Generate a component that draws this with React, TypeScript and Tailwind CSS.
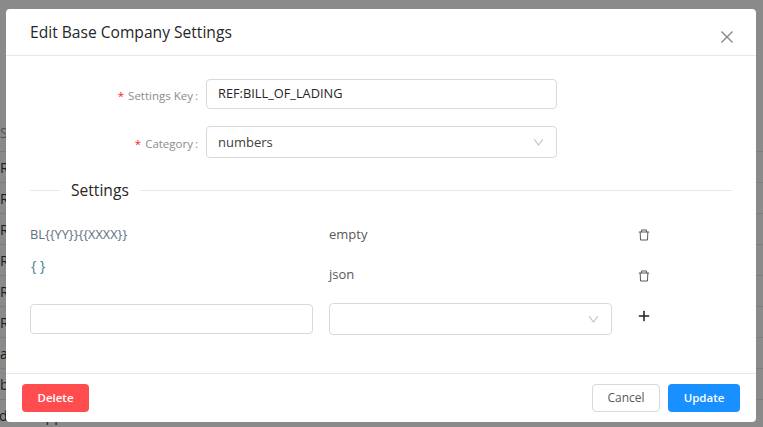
import { AiOutlineClose, AiOutlineDelete, AiOutlineDown, AiOutlinePlus } from 'react-icons/ai';

const rowLetters = ['R', 'R', 'R', 'R', 'R', 'R', 'a', 'b'];

function BackgroundPage() {
  return (
    <div className="h-[427px] bg-[#8a8a8a] text-[#1c1c1c]">
      <div className="h-[133px] overflow-hidden pt-[12px] text-[28px] font-bold leading-[30px]">
        <span className="ml-[-16px]">a</span>
      </div>
      <div className="h-[19px] border-b border-[#7c7c7c] text-[14px] leading-[0px] text-[#555]">S</div>
      {rowLetters.map((letter, index) => (
        <div key={index} className="flex h-[31px] items-center border-b border-[#7c7c7c] text-[14px]">
          {letter}
        </div>
      ))}
      <div className="flex h-[31px] items-center text-[14px]">
        <span className="ml-[-1px]">d</span>
        <span className="ml-[38px]">pp</span>
      </div>
    </div>
  );
}

function FormRow({ label, children }: { label: string; children: React.ReactNode }) {
  return (
    <div className="flex items-center">
      <div className="flex w-[200px] justify-end pr-[8px] pt-[3px] text-[11.5px] text-[#8c8c8c]">
        <span className="mr-[4px] text-[#f5222d]">*</span>
        {label}
        <span className="ml-[2px]">:</span>
      </div>
      {children}
    </div>
  );
}

function SelectBox({ value, className }: { value?: string; className: string }) {
  return (
    <div className={`flex h-[32px] items-center justify-between rounded-[4px] border border-[#d9d9d9] pl-[11px] pr-[11px] text-[13px] text-[#404040] ${className}`}>
      <span className="pt-[1px]">{value}</span>
      <AiOutlineDown className="h-[13px] w-[13px] text-[#bfbfbf]" />
    </div>
  );
}

export default function App() {
  return (
    <div className="relative h-[427px] w-[763px] overflow-hidden font-['Open_Sans','Noto_Sans',sans-serif]">
      <BackgroundPage />

      {/* modal */}
      <div className="absolute left-[6px] top-[9px] flex h-[413px] w-[750px] flex-col rounded-[4px] bg-white">
        <div className="relative flex h-[47px] items-center border-b border-[#e8e8e8] pl-[24px] pt-[1px] text-[15.6px] font-medium text-[#262626]">
          Edit Base Company Settings
          <AiOutlineClose className="absolute right-[20px] top-[19px] h-[18px] w-[18px] text-[#8c8c8c]" />
        </div>

        <div className="flex flex-1 flex-col pt-[23px]">
          <div className="flex flex-col gap-[17px]">
            <FormRow label="Settings Key">
              <div className="flex h-[30px] w-[351px] items-center rounded-[4px] border border-[#d9d9d9] pl-[11px] text-[12.8px] text-[#262626]">
                REF:BILL_OF_LADING
              </div>
            </FormRow>
            <FormRow label="Category">
              <SelectBox value="numbers" className="w-[351px]" />
            </FormRow>
          </div>

          <div className="mx-[24px] mt-[22px] flex items-center">
            <div className="h-px w-[30px] bg-[#e8e8e8]" />
            <span className="px-[11px] text-[15.6px] font-medium leading-[20px] text-[#262626]">Settings</span>
            <div className="h-px flex-1 bg-[#e8e8e8]" />
          </div>

          <div className="mx-[24px] mt-[24px] h-[110px] text-[13px] text-[#595959]">
            <div className="flex h-[22px] items-center">
              <span className="w-[299px] text-[12.8px] text-[#5f6f80]">BL{'{{YY}}{{XXXX}}'}</span>
              <span className="w-[308px]">empty</span>
              <AiOutlineDelete className="h-[14px] w-[14px] text-[#595959]" />
            </div>
            <div className="mt-[19px] flex h-[24px]">
              <span className="mt-[-10px] w-[299px] pl-[1px] text-[14px] text-[#3f7f93]">{'{ }'}</span>
              <span className="w-[308px]">json</span>
              <AiOutlineDelete className="mt-[4px] h-[14px] w-[14px] text-[#595959]" />
            </div>
            <div className="mt-[14px] flex items-center">
              <div className="mr-[16px] h-[30px] w-[283px] rounded-[4px] border border-[#d9d9d9]" />
              <SelectBox className="w-[283px]" />
              <AiOutlinePlus className="ml-[25px] mt-[-6px] h-[14px] w-[14px] stroke-[40] text-[#262626]" />
            </div>
          </div>
        </div>

        <div className="flex h-[49px] items-center justify-between border-t border-[#e8e8e8] px-[16px] pb-[1px]">
          <button className="h-[28px] w-[67px] rounded-[4px] bg-[#ff4d4f] text-[11.5px] font-semibold text-white">Delete</button>
          <div className="flex gap-[8px]">
            <button className="h-[28px] w-[68px] rounded-[4px] border border-[#d9d9d9] text-[12px] text-[#595959]">Cancel</button>
            <button className="h-[28px] w-[72px] rounded-[4px] bg-[#1890ff] text-[11.5px] font-semibold text-white">Update</button>
          </div>
        </div>
      </div>
    </div>
  );
}
